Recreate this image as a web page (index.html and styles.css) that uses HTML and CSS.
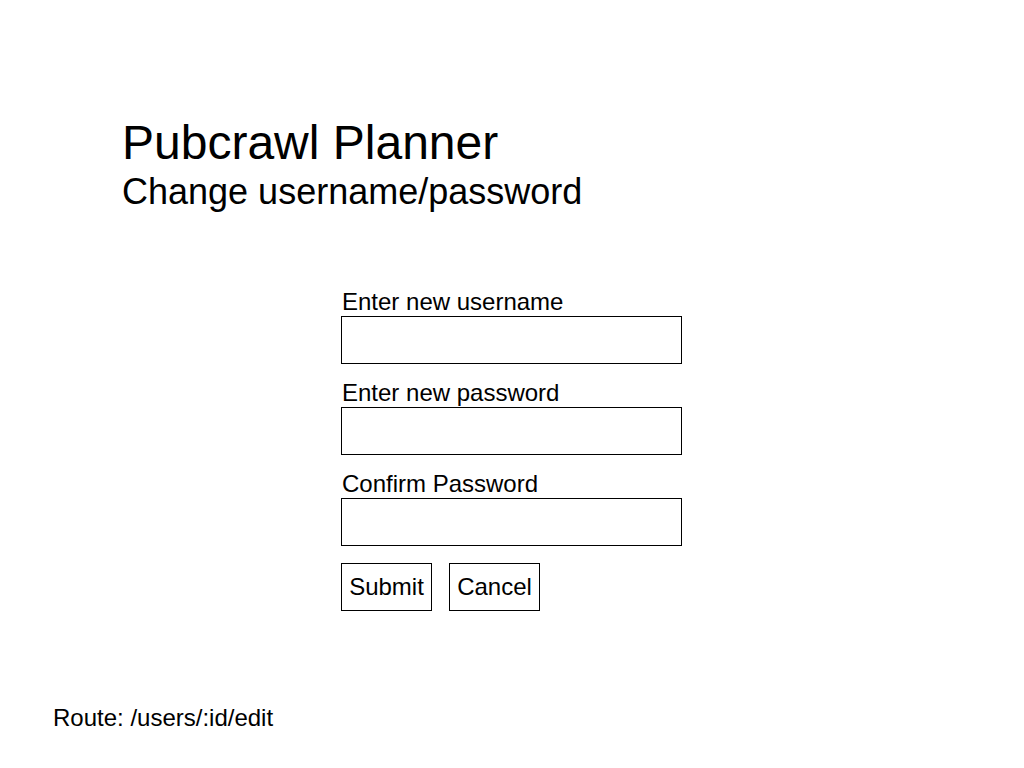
FILE: index.html
```html
<!DOCTYPE html>
<html>
<head>
<meta charset="utf-8">
<link rel="stylesheet" href="styles.css">
</head>
<body>
<div class="page">
  <header class="header">
    <h1 class="title">Pubcrawl Planner</h1>
    <h2 class="subtitle">Change username/password</h2>
  </header>
  <form class="form">
    <label class="field">
      <span class="label">Enter new username</span>
      <span class="input"></span>
    </label>
    <label class="field">
      <span class="label">Enter new password</span>
      <span class="input"></span>
    </label>
    <label class="field">
      <span class="label">Confirm Password</span>
      <span class="input"></span>
    </label>
    <div class="actions">
      <span class="btn">Submit</span>
      <span class="btn">Cancel</span>
    </div>
  </form>
  <footer class="route">Route: /users/:id/edit</footer>
</div>
</body>
</html>
```
FILE: styles.css
```css
html, body {
  margin: 0;
  padding: 0;
  background: #fff;
}
body {
  font-family: "Liberation Sans", Arial, sans-serif;
  color: #000;
  width: 1024px;
  height: 768px;
  overflow: hidden;
}
.page {
  display: flex;
  flex-direction: column;
}
.header {
  padding: 119px 0 0 122px;
}
.title {
  margin: 0;
  font-size: 48px;
  line-height: 48px;
  font-weight: normal;
}
.subtitle {
  margin: 7px 0 0;
  font-size: 36px;
  line-height: 36px;
  font-weight: normal;
}
.form {
  margin: 80px 0 0 341px;
  width: 341px;
  display: flex;
  flex-direction: column;
  gap: 17px;
}
.field {
  display: flex;
  flex-direction: column;
  gap: 2px;
}
.label {
  display: block;
  font-size: 24px;
  line-height: 24px;
  padding-left: 1px;
}
.input {
  display: block;
  height: 46px;
  border: 1px solid #000;
}
.actions {
  display: flex;
  gap: 17px;
}
.btn {
  box-sizing: border-box;
  width: 91px;
  height: 48px;
  border: 1px solid #000;
  font-size: 24px;
  display: flex;
  align-items: center;
  justify-content: center;
}
.route {
  margin: 95px 0 0 53px;
  font-size: 24px;
  line-height: 24px;
}
```
